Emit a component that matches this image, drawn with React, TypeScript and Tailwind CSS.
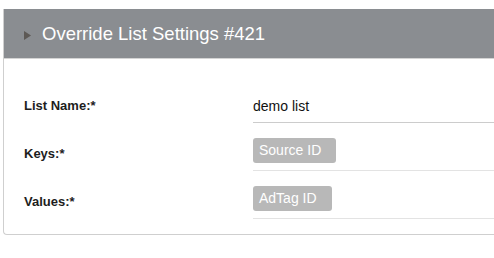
export default function App() {
  const rows = [
    { label: 'List Name:*', value: 'demo list', chip: false },
    { label: 'Keys:*', value: 'Source ID', chip: true },
    { label: 'Values:*', value: 'AdTag ID', chip: true },
  ]

  return (
    <div className="w-[494px] h-[258px] overflow-hidden bg-white font-['Liberation_Sans',Arial,sans-serif]">
      <div className="ml-[3px] mt-[9px] w-[540px] rounded-b-[4px] border-l border-b border-[#cfcfcf] bg-white">
        {/* Header */}
        <div className="flex h-[50px] items-center border-b border-[#d4d4d4] bg-[#8a8d91] pl-[20px]">
          <svg width="7" height="9" viewBox="0 0 7 9" className="mr-[11px] mt-[3px]">
            <path d="M0 0 L7 4.5 L0 9 Z" fill="#5d5955" />
          </svg>
          <span className="text-[18.5px] text-white">Override List Settings #421</span>
        </div>

        {/* Body */}
        <div className="pt-[16px] pb-[15px]">
          {rows.map((row, i) => (
            <div key={i} className="flex">
              <div className="w-[249px] pl-[20px] pt-[18px] pb-[5px] text-[13px] font-bold leading-[25px] text-[#1d1d1d]">
                {row.label}
              </div>
              <div
                className={
                  'flex-1 pt-[15px] pb-[7px] border-b ' +
                  (i === 0 ? 'border-[#cccccc]' : 'border-[#e3e3e3]')
                }
              >
                {row.chip ? (
                  <span className="inline-block h-[25px] rounded-[3px] bg-[#b8b8b8] pl-[6px] pr-[15px] text-[14px] leading-[25px] text-white">
                    {row.value}
                  </span>
                ) : (
                  <span className="block pt-[4px] -mb-[4px] text-[14px] leading-[25px] text-[#111]">{row.value}</span>
                )}
              </div>
            </div>
          ))}
        </div>
      </div>
    </div>
  )
}
